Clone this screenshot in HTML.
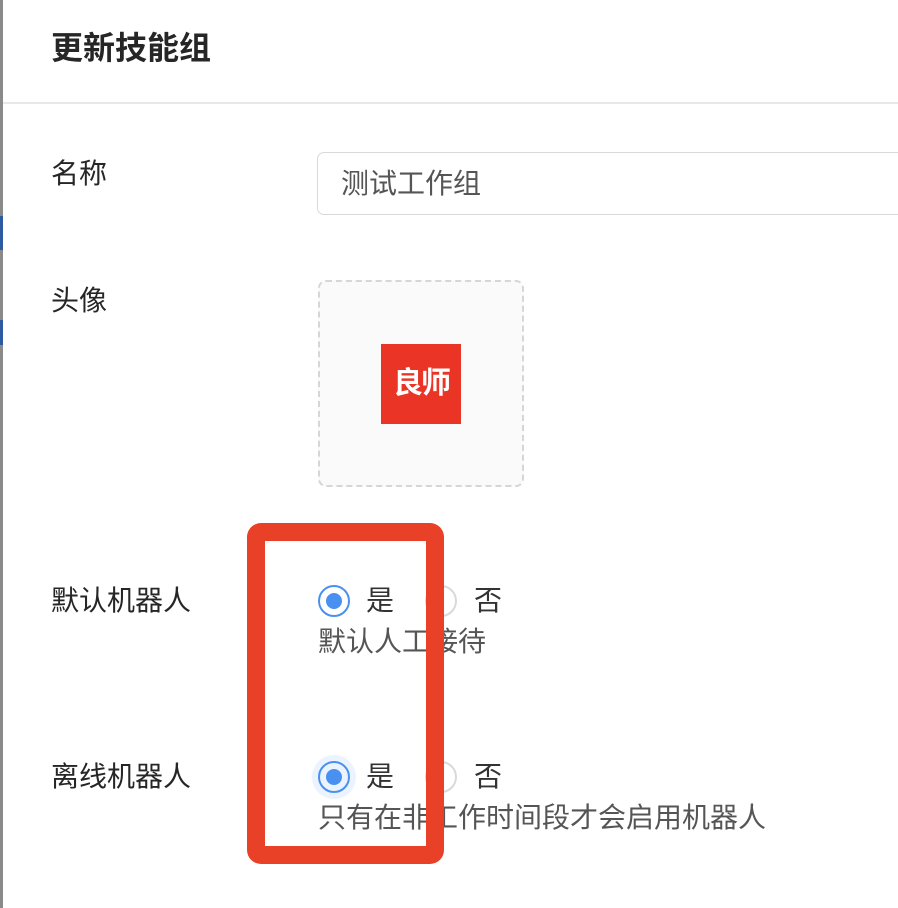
<!DOCTYPE html>
<html><head><meta charset="utf-8"><style>
html,body{margin:0;padding:0;width:898px;height:908px;overflow:hidden;background:#fff;font-family:"Liberation Sans","Noto Sans CJK SC",sans-serif;}
.abs{position:absolute;}
.lbl{position:absolute;left:51px;font-size:28px;color:#262626;line-height:34px;}
.radio{position:absolute;width:32px;height:32px;border-radius:50%;box-sizing:border-box;}
.on{border:2px solid #4a90f0;}
.on::after{content:"";position:absolute;left:6px;top:6px;width:16px;height:16px;border-radius:50%;background:#4a90f0;}
.off{border:2px solid #d9d9d9;}
.t{position:absolute;font-size:28px;color:#333;line-height:34px;}
.help{position:absolute;left:318px;font-size:28px;color:#555;line-height:34px;white-space:nowrap;}
</style></head><body>
<div class="abs" style="left:0;top:0;width:3px;height:908px;background:#8a8a8a"></div>
<div class="abs" style="left:0;top:216px;width:3px;height:34px;background:#2d5aa0"></div>
<div class="abs" style="left:0;top:320px;width:3px;height:25px;background:#2d5aa0"></div>
<div class="abs" style="left:51px;top:28px;font-size:32px;font-weight:bold;color:#262626;line-height:40px">更新技能组</div>
<div class="abs" style="left:3px;top:102px;width:895px;height:2px;background:#e8e8e8"></div>
<div class="lbl" style="top:157px">名称</div>
<div class="abs" style="left:317px;top:152px;width:600px;height:63px;border:1.5px solid #d9d9d9;border-radius:7px;box-sizing:border-box"></div>
<div class="abs" style="left:341px;top:167px;font-size:28px;color:#555;line-height:34px">测试工作组</div>
<div class="lbl" style="top:284px">头像</div>
<div class="abs" style="left:318px;top:280px;width:206px;height:207px;border:2px dashed #d6d6d6;border-radius:8px;background:#fafafa;box-sizing:border-box"></div>
<div class="abs" style="left:381px;top:344px;width:80px;height:80px;background:#e93426;color:#fff;font-size:30px;font-weight:bold;line-height:80px;text-align:center;letter-spacing:-2px">良师</div>
<div class="lbl" style="top:584px">默认机器人</div>
<div class="radio on" style="left:318px;top:585px"></div>
<div class="t" style="left:366px;top:584px">是</div>
<div class="radio off" style="left:425px;top:585px"></div>
<div class="t" style="left:474px;top:584px">否</div>
<div class="help" style="top:625px">默认人工接待</div>
<div class="lbl" style="top:760px">离线机器人</div>
<div class="abs" style="left:312px;top:755px;width:44px;height:44px;border-radius:50%;background:#eaf3fe"></div>
<div class="radio on" style="left:318px;top:761px"></div>
<div class="t" style="left:366px;top:760px">是</div>
<div class="radio off" style="left:425px;top:761px"></div>
<div class="t" style="left:474px;top:760px">否</div>
<div class="help" style="top:801px">只有在非工作时间段才会启用机器人</div>
<div class="abs" style="left:247px;top:523px;width:197px;height:341px;border:18px solid #e94128;border-radius:14px;box-sizing:border-box"></div>
</body></html>
